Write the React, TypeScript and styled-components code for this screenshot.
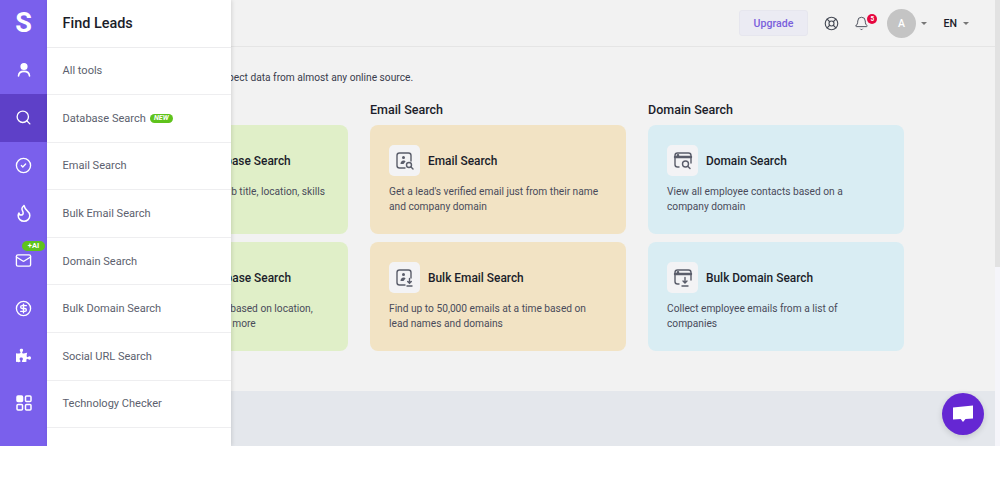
import React from "react";
import styled, { createGlobalStyle } from "styled-components";
import { Search, CircleCheck, Flame, Mail, CircleDollarSign, LifeBuoy, Bell } from "lucide-react";
import { FaPuzzlePiece } from "react-icons/fa";

const Global = createGlobalStyle`
  html, body { margin: 0; padding: 0; background: #fff; }
  * { box-sizing: border-box; }
  body { font-family: Roboto, "Liberation Sans", sans-serif; }
`;

const Shell = styled.div`
  display: flex;
  height: 446px;
  width: 1000px;
  position: relative;
  overflow: hidden;
`;
const Rail = styled.nav`
  width: 47px;
  flex: none;
  background: #7a60ec;
  display: flex;
  flex-direction: column;
  color: #fff;
`;
const Logo = styled.div`
  height: 46.500px;
  display: flex;
  align-items: center;
  justify-content: center;
  font-size: 27px;
  font-weight: 700;
  line-height: 1;
`;
const RailItem = styled.div<{ $active?: boolean }>`
  height: 47.600px;
  flex: none;
  display: flex;
  align-items: center;
  justify-content: center;
  position: relative;
  background: ${(p) => (p.$active ? "#5e40c8" : "transparent")};
`;
const AiBadge = styled.span`
  position: absolute;
  top: 4.500px;
  left: 22px;
  width: 23px;
  height: 9.500px;
  border-radius: 5px;
  background: #5fc31c;
  color: #fff;
  font-size: 7.500px;
  font-weight: 700;
  line-height: 9.500px;
  text-align: center;
`;
const Flyout = styled.aside`
  position: absolute;
  left: 47px;
  top: 0;
  bottom: 0;
  width: 184px;
  background: #fff;
  box-shadow: 1px 0 4px rgba(0, 0, 0, 0.12);
  z-index: 2;
`;
const FlyoutTitle = styled.div`
  height: 47.500px;
  padding-left: 15.500px;
  display: flex;
  align-items: center;
  font-size: 14.450px;
  font-weight: 500;
  color: #1b1d2a;
  border-bottom: 1px solid #ececee;
`;
const FlyoutRow = styled.div`
  height: 47.600px;
  padding-left: 15.500px;
  display: flex;
  align-items: center;
  gap: 4px;
  font-size: 11.050px;
  color: #5c5f6e;
  border-bottom: 1px solid #eeeef0;
`;
const NewTag = styled.span`
  width: 23px;
  height: 9px;
  border-radius: 5px;
  background: #5fc31c;
  color: #fff;
  font-size: 7px;
  font-weight: 700;
  font-style: italic;
  line-height: 9px;
  text-align: center;
`;
const Main = styled.main`
  flex: 1;
  min-width: 0;
  background: #f2f2f2;
  display: flex;
  flex-direction: column;
`;
const TopBar = styled.header`
  height: 47px;
  flex: none;
  display: flex;
  align-items: center;
  justify-content: flex-end;
  padding-right: 26px;
  border-bottom: 1px solid #e5e5e5;
`;
const Upgrade = styled.button`
  width: 69px;
  height: 26px;
  margin-right: 16px;
  padding: 0;
  background: #ebebf3;
  border: 1px solid #e6e6ee;
  border-radius: 3px;
  color: #7a60dc;
  font: 500 10.600px Roboto, sans-serif;
`;
const TopIcon = styled.span`
  display: flex;
  color: #454a55;
  margin-right: 15px;
  position: relative;
`;
const CountBadge = styled.span`
  position: absolute;
  top: -1.500px;
  right: -8.500px;
  width: 10px;
  height: 10px;
  border-radius: 50%;
  background: #e6063f;
  color: #fff;
  font-size: 6.500px;
  font-weight: 700;
  line-height: 10px;
  text-align: center;
`;
const Avatar = styled.div`
  width: 29px;
  height: 29px;
  border-radius: 50%;
  background: #c4c4c4;
  color: #fff;
  display: flex;
  align-items: center;
  justify-content: center;
  font-size: 10.500px;
  font-weight: 500;
  margin-left: 3px;
`;
const Caret = styled.span<{ $gap: number }>`
  width: 0;
  height: 0;
  border-left: 3px solid transparent;
  border-right: 3px solid transparent;
  border-top: 3px solid #777;
  margin-left: ${(p) => p.$gap}px;
`;
const Lang = styled.span`
  font-size: 10.600px;
  font-weight: 500;
  color: #1b1d2a;
  margin-left: 16px;
`;
const Body = styled.div`
  flex: 1;
  padding: 23px 0 0 45px;
`;
const Intro = styled.p`
  margin: 0 0 16.500px;
  height: 15px;
  font-size: 10.200px;
  line-height: 15px;
  color: #3a3d4d;
  white-space: nowrap;
`;
const Columns = styled.div`
  display: grid;
  grid-template-columns: repeat(3, 256px);
  column-gap: 22px;
`;
const Column = styled.section`
  display: flex;
  flex-direction: column;
  gap: 8px;
`;
const Heading = styled.h2`
  margin: 0 0 -0.500px;
  height: 16px;
  font-size: 12.500px;
  line-height: 16px;
  font-weight: 500;
  color: #1b1d2a;
`;
const Card = styled.article<{ $bg: string }>`
  height: 109px;
  border-radius: 8px;
  background: ${(p) => p.$bg};
  padding: 20px 19px 0;
`;
const CardHead = styled.div`
  display: flex;
  align-items: center;
  gap: 8px;
  margin-bottom: 8px;
`;
const IconBox = styled.div`
  width: 31px;
  height: 31px;
  border-radius: 5px;
  background: #f3f3f5;
  display: flex;
  align-items: center;
  justify-content: center;
  flex: none;
`;
const CardTitle = styled.h3`
  margin: 0;
  font-size: 11.900px;
  font-weight: 500;
  color: #1b1d2a;
  white-space: nowrap;
`;
const CardText = styled.p`
  margin: 0;
  font-size: 10.200px;
  line-height: 15.300px;
  color: #494b5a;
`;
const Footer = styled.footer`
  height: 55px;
  flex: none;
  background: #e4e7ec;
`;
const Scroll = styled.div`
  width: 5px;
  flex: none;
  background: #f5f5fa;
`;
const Thumb = styled.div`
  height: 267px;
  background: #e2e2e2;
`;
const Chat = styled.button`
  position: absolute;
  left: 942px;
  top: 393px;
  width: 42px;
  height: 42px;
  padding: 0;
  border: 0;
  border-radius: 50%;
  background: #6527d3;
  box-shadow: 0 2px 6px rgba(0, 0, 0, 0.14);
  display: flex;
  align-items: center;
  justify-content: center;
  z-index: 3;
`;

const UserIcon = () => (
  <svg width="16" height="16" viewBox="0 0 16 16" fill="none" stroke="#fff" strokeWidth="1.600" strokeLinecap="round">
    <circle cx="8" cy="4.500" r="2.800" fill="#fff" />
    <path d="M2.500 14c.2-3 2.600-4.600 5.500-4.600s5.300 1.600 5.500 4.600" />
  </svg>
);
const GridIcon = () => (
  <svg width="16" height="16" viewBox="0 0 16 16" fill="none" stroke="#fff" strokeWidth="1.500">
    <rect x="1" y="1" width="5.500" height="5.500" rx="1" fill="#fff" />
    <rect x="9.500" y="1" width="5.500" height="5.500" rx="1" />
    <rect x="1" y="9.500" width="5.500" height="5.500" rx="1" />
    <rect x="9.500" y="9.500" width="5.500" height="5.500" rx="1" />
  </svg>
);
const PersonFrame = ({ tool }: { tool: "search" | "down" }) => (
  <svg width="20" height="20" viewBox="0 0 20 20" fill="none" stroke="#5a5d6a" strokeWidth="1.400" strokeLinecap="round">
    <path d="M10 17H4.500A2.500 2.500 0 0 1 2 14.500v-10A2.500 2.500 0 0 1 4.500 2h9A2.500 2.500 0 0 1 16 4.500V10" />
    <circle cx="8.500" cy="6.500" r="1.500" fill="#5a5d6a" stroke="none" />
    <path d="M5.500 13c0-2.200 1.300-3.500 3-3.500 1 0 1.600.4 2 1l-2 2.500z" fill="#5a5d6a" stroke="none" />
    {tool === "search" ? (
      <>
        <circle cx="14" cy="14" r="2.500" />
        <path d="M16 16l2 2" />
      </>
    ) : (
      <path d="M14.500 10.500v4.500M12.700 13.500l1.800 1.800 1.800-1.800M12 18h5" />
    )}
  </svg>
);
const BrowserFrame = ({ tool }: { tool: "search" | "down" }) => (
  <svg width="20" height="20" viewBox="0 0 20 20" fill="none" stroke="#5a5d6a" strokeWidth="1.400" strokeLinecap="round">
    <path d="M6 16H4.500A2.500 2.500 0 0 1 2 13.500v-9A2.500 2.500 0 0 1 4.500 2h11A2.500 2.500 0 0 1 18 4.500V12" />
    <path d="M2 6h16" strokeWidth="2.400" />
    <circle cx="5" cy="4.200" r=".6" />
    {tool === "search" ? (
      <>
        <circle cx="12.500" cy="13" r="3" />
        <path d="M15 15.500l2 2" />
      </>
    ) : (
      <path d="M12 9.500v5.500M10 13l2 2 2-2M9 18h6" />
    )}
  </svg>
);
const ChatGlyph = () => (
  <svg width="22" height="18" viewBox="0 0 22 18">
    <path d="M1 2.500 21 .5v13l-7.500.4-2.500 3-2.300-2.800L1 14.500z" fill="#fff" />
  </svg>
);

const railIcon = { size: 17, strokeWidth: 1.900 };
const tools = ["All tools", "Database Search", "Email Search", "Bulk Email Search", "Domain Search", "Bulk Domain Search", "Social URL Search", "Technology Checker"];
const GREEN = "#e0efc8";
const SAND = "#f2e3c4";
const BLUE = "#d9edf3";

const columns = [
  {
    heading: "Database Search",
    bg: GREEN,
    cards: [
      { title: "Contacts Database Search", text: "Search B2B contacts, by job title, location, skills and more", icon: <PersonFrame tool="search" /> },
      { title: "Bulk B2B Database Search", text: "Find B2B contacts in bulk, based on location, city, company, job title and more", icon: <PersonFrame tool="down" /> },
    ],
  },
  {
    heading: "Email Search",
    bg: SAND,
    cards: [
      { title: "Email Search", text: "Get a lead's verified email just from their name and company domain", icon: <PersonFrame tool="search" /> },
      { title: "Bulk Email Search", text: "Find up to 50,000 emails at a time based on lead names and domains", icon: <PersonFrame tool="down" /> },
    ],
  },
  {
    heading: "Domain Search",
    bg: BLUE,
    cards: [
      { title: "Domain Search", text: "View all employee contacts based on a company domain", icon: <BrowserFrame tool="search" /> },
      { title: "Bulk Domain Search", text: "Collect employee emails from a list of companies", icon: <BrowserFrame tool="down" /> },
    ],
  },
];

export default function App() {
  return (
    <Shell>
      <Global />
      <Rail>
        <Logo>S</Logo>
        <RailItem><UserIcon /></RailItem>
        <RailItem $active><Search {...railIcon} /></RailItem>
        <RailItem><CircleCheck {...railIcon} /></RailItem>
        <RailItem><Flame size={20} strokeWidth={1.800} /></RailItem>
        <RailItem><AiBadge>+AI</AiBadge><Mail {...railIcon} /></RailItem>
        <RailItem><CircleDollarSign {...railIcon} /></RailItem>
        <RailItem><FaPuzzlePiece size={15} /></RailItem>
        <RailItem><GridIcon /></RailItem>
      </Rail>
      <Flyout>
        <FlyoutTitle>Find Leads</FlyoutTitle>
        {tools.map((t) => (
          <FlyoutRow key={t}>
            {t}
            {t === "Database Search" && <NewTag>NEW</NewTag>}
          </FlyoutRow>
        ))}
      </Flyout>
      <Main>
        <TopBar>
          <Upgrade>Upgrade</Upgrade>
          <TopIcon><LifeBuoy size={15} strokeWidth={1.800} /></TopIcon>
          <TopIcon><Bell size={15} strokeWidth={1.500} /><CountBadge>5</CountBadge></TopIcon>
          <Avatar>A</Avatar>
          <Caret $gap={5.500} />
          <Lang>EN</Lang>
          <Caret $gap={6} />
        </TopBar>
        <Body>
          <Intro>Find and connect verified prospect data from almost any online source.</Intro>
          <Columns>
            {columns.map((c) => (
              <Column key={c.heading}>
                <Heading>{c.heading}</Heading>
                {c.cards.map((card) => (
                  <Card key={card.title} $bg={c.bg}>
                    <CardHead>
                      <IconBox>{card.icon}</IconBox>
                      <CardTitle>{card.title}</CardTitle>
                    </CardHead>
                    <CardText>{card.text}</CardText>
                  </Card>
                ))}
              </Column>
            ))}
          </Columns>
        </Body>
        <Footer />
      </Main>
      <Scroll><Thumb /></Scroll>
      <Chat aria-label="Chat"><ChatGlyph /></Chat>
    </Shell>
  );
}
